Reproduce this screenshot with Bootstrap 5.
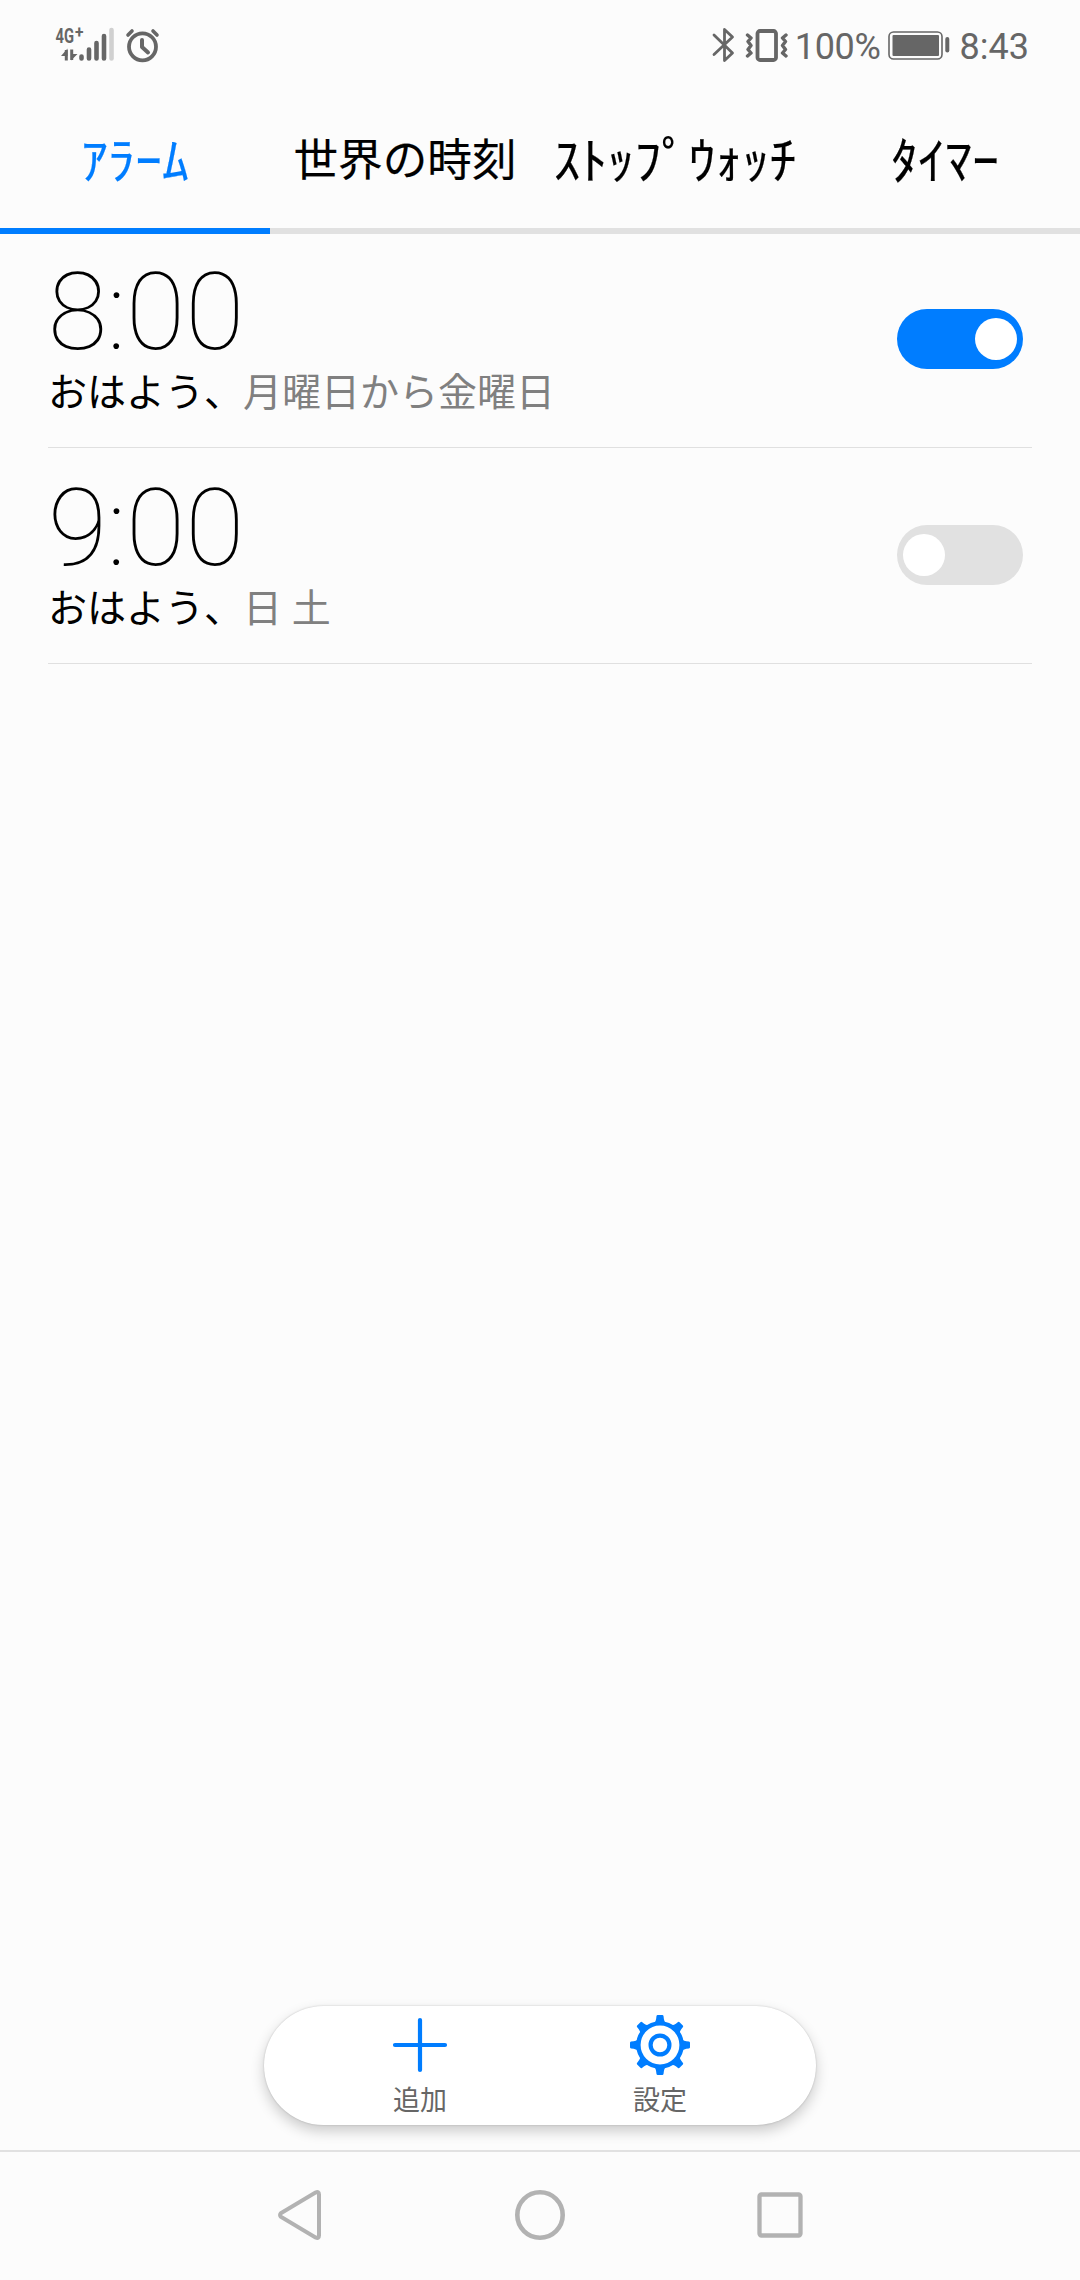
<!DOCTYPE html>
<html lang="ja">
<head>
<meta charset="utf-8">
<meta name="viewport" content="width=device-width, initial-scale=1">
<title>アラーム</title>
<link href="https://cdn.jsdelivr.net/npm/bootstrap@5.3.0/dist/css/bootstrap.min.css" rel="stylesheet">
<style>
body{background:#fcfcfc;color:#000;font-family:Roboto,"Noto Sans CJK JP",sans-serif;overflow:hidden}
.screen{height:2280px}
.status{height:90px;color:#666;font-size:36px;line-height:56px;padding:19px 51px 0 55px}
.status svg{display:block}
.charge{letter-spacing:-.3px}
.netlabel{font:700 20px Roboto,sans-serif}
.tabs{height:144px}
.tabs .tab{width:270px;height:144px;border:0;border-bottom:6px solid #e1e1e1;border-radius:0;font-size:44.6px;line-height:60px;padding:41px 0 0;color:#000;text-align:center;white-space:nowrap;-webkit-text-stroke:.2px currentColor}
.tabs .tab.kana{font-size:54px;padding-top:42px}
.tabs .tab.kana span{display:inline-block;transform:scaleY(.93)}
.tabs .tab.active{color:#007dff;border-color:#007dff}
.alarm{height:216px;border-bottom:1px solid #e0e0e0;margin:0 48px}
.alarm:first-child{height:214px}
.alarm:first-child .body{padding-top:24px}
.alarm .body{padding-top:26px}
.clock{font-size:108px;font-weight:100;line-height:108px;letter-spacing:-.1px}
.note{font-size:39px;line-height:50px;margin-top:2px}
.note span{color:#808080}
.toggle{width:126px;height:60px;padding:9px 6px;border-radius:30px;background:#e1e1e1;margin:75px 9px 0 0}
.alarm:nth-child(2) .toggle{margin-top:77px}
.toggle i{display:block;width:42px;height:42px;border-radius:50%;background:#fff}
.toggle.on{background:#007dff;justify-content:flex-end}
.pill{width:552px;height:119px;border-radius:60px;background:#fff;box-shadow:0 0 2px rgba(0,0,0,.2),0 6px 14px rgba(0,0,0,.2);margin-bottom:25px;padding:0 36px}
.pill .action{width:240px;font-size:27px;line-height:32px;color:#666;padding-top:9px}
.pill svg{display:block;margin-bottom:10px}
.softkeys{height:130px;border-top:2px solid #e1e1e1}
.softkeys .key{width:240px}
</style>
</head>
<body>
<div class="screen d-flex flex-column">
  <header class="status d-flex justify-content-between">
    <div class="d-flex">
      <svg width="110" height="54" viewBox="55 19 110 54" fill="none" stroke="#666">
        <text class="netlabel" x="55.500" y="42.500" textLength="18.500" lengthAdjust="spacingAndGlyphs" fill="#666" stroke="none">4G</text>
        <text class="netlabel" x="75" y="38" textLength="8.500" lengthAdjust="spacingAndGlyphs" fill="#666" stroke="none" style="font-size:16px">+</text>
        <g stroke-width="3"><path d="M66.300 60.500V50M71.700 49.500V60"/></g><path d="M61 56l6.500-7.500V56zM71 60.500l6.500-6.500H71z" fill="#666" stroke="none"/>
        <g stroke-width="4.600" stroke-linecap="round"><path d="M81.500 56.500v2M89 49.500v9M96.500 43v15.500M104 36v22.500"/><path d="M111.500 30v28.500" stroke="#d0d0d0"/></g>
        <circle cx="142.500" cy="46.800" r="13.500" stroke-width="3.800"/><path d="M142 40v7l6 5.500" stroke-width="4" stroke-linecap="round" stroke-linejoin="round"/><path d="M128 35l4-4M157 35l-4-4" stroke-width="3.600" stroke-linecap="round"/>
      </svg>
    </div>
    <div class="d-flex">
      <svg width="84" height="54" viewBox="710 19 84 54" fill="none" stroke="#666">
        <path d="M713 35l18.500 18-8 7.500v-31l8 7.500L713 54.500" stroke-width="2.800" stroke-linecap="round" stroke-linejoin="round"/>
        <rect x="756.500" y="31" width="18.500" height="29" rx="2.500" stroke-width="3.800"/>
        <path d="M746.500 35l3.500 3-3 3.500 3 4-3 4 3 3.500-3.500 3M785 35l-3.500 3 3 3.500-3 4 3 4-3 3.500 3.500 3" stroke-width="3.400" stroke-linecap="round" stroke-linejoin="round"/>
      </svg>
      <span class="charge">100%</span>
      <svg width="79" height="54" viewBox="881 19 79 54" fill="none" stroke="#666"><rect x="889" y="32" width="53" height="27" rx="4.500" stroke-width="1.600"/><rect x="892.500" y="35" width="46.500" height="21" rx="1" fill="#666" stroke="none"/><path d="M947.300 39v11.500" stroke-width="4" stroke-linecap="round"/></svg>
      <span>8:43</span>
    </div>
  </header>
  <nav class="tabs nav flex-nowrap">
    <a class="tab nav-link kana active"><span>ｱﾗｰﾑ</span></a>
    <a class="tab nav-link">世界の時刻</a>
    <a class="tab nav-link kana"><span>ｽﾄｯﾌﾟｳｫｯﾁ</span></a>
    <a class="tab nav-link kana"><span>ﾀｲﾏｰ</span></a>
  </nav>
  <main class="flex-grow-1">
    <section class="alarm d-flex justify-content-between">
      <div class="body"><div class="clock">8:00</div><div class="note">おはよう、<span>月曜日から金曜日</span></div></div>
      <div class="toggle on d-flex"><i></i></div>
    </section>
    <section class="alarm d-flex justify-content-between">
      <div class="body"><div class="clock">9:00</div><div class="note">おはよう、<span>日 土</span></div></div>
      <div class="toggle d-flex"><i></i></div>
    </section>
  </main>
  <div class="pill d-flex mx-auto flex-shrink-0">
    <div class="action d-flex flex-column align-items-center">
      <svg width="60" height="60" viewBox="-30 -30 60 60"><path d="M0-25V25M-25 0H25" stroke="#007dff" stroke-width="4.200" stroke-linecap="round"/></svg>追加
    </div>
    <div class="action d-flex flex-column align-items-center">
      <svg width="60" height="60" viewBox="-30 -30 60 60" fill="none" stroke="#007dff">
        <circle r="21.600" stroke-width="4.400"/><circle r="9.400" stroke-width="4.200"/>
        <g fill="#007dff" stroke="none"><path id="tooth" d="M-6-22q2-1 2.500-7 .2-1 1.200-1h4.600q1 0 1.200 1 .5 6 2.500 7z"/><use href="#tooth" transform="rotate(45)"/><use href="#tooth" transform="rotate(90)"/><use href="#tooth" transform="rotate(135)"/><use href="#tooth" transform="rotate(180)"/><use href="#tooth" transform="rotate(225)"/><use href="#tooth" transform="rotate(270)"/><use href="#tooth" transform="rotate(315)"/></g>
      </svg>設定
    </div>
  </div>
  <footer class="softkeys d-flex justify-content-center flex-shrink-0">
    <div class="key d-flex justify-content-center"><svg width="60" height="128" viewBox="270 2152 60 128" fill="none" stroke="#b2b2b2" stroke-width="4"><path d="M280.800 2213.200L315.500 2192.600Q319 2191 319 2194.500V2235.500Q319 2239 315.500 2237.400L280.800 2216.800Q279.400 2215 280.800 2213.200z"/></svg></div>
    <div class="key d-flex justify-content-center"><svg width="60" height="128" viewBox="510 2152 60 128" fill="none" stroke="#b2b2b2" stroke-width="4.600"><circle cx="540" cy="2215" r="22.700"/></svg></div>
    <div class="key d-flex justify-content-center"><svg width="60" height="128" viewBox="750 2152 60 128" fill="none" stroke="#b2b2b2" stroke-width="4.300"><rect x="759.500" y="2194.500" width="41" height="41" rx="2"/></svg></div>
  </footer>
</div>
<script src="https://cdn.jsdelivr.net/npm/bootstrap@5.3.0/dist/js/bootstrap.bundle.min.js"></script>
</body>
</html>
